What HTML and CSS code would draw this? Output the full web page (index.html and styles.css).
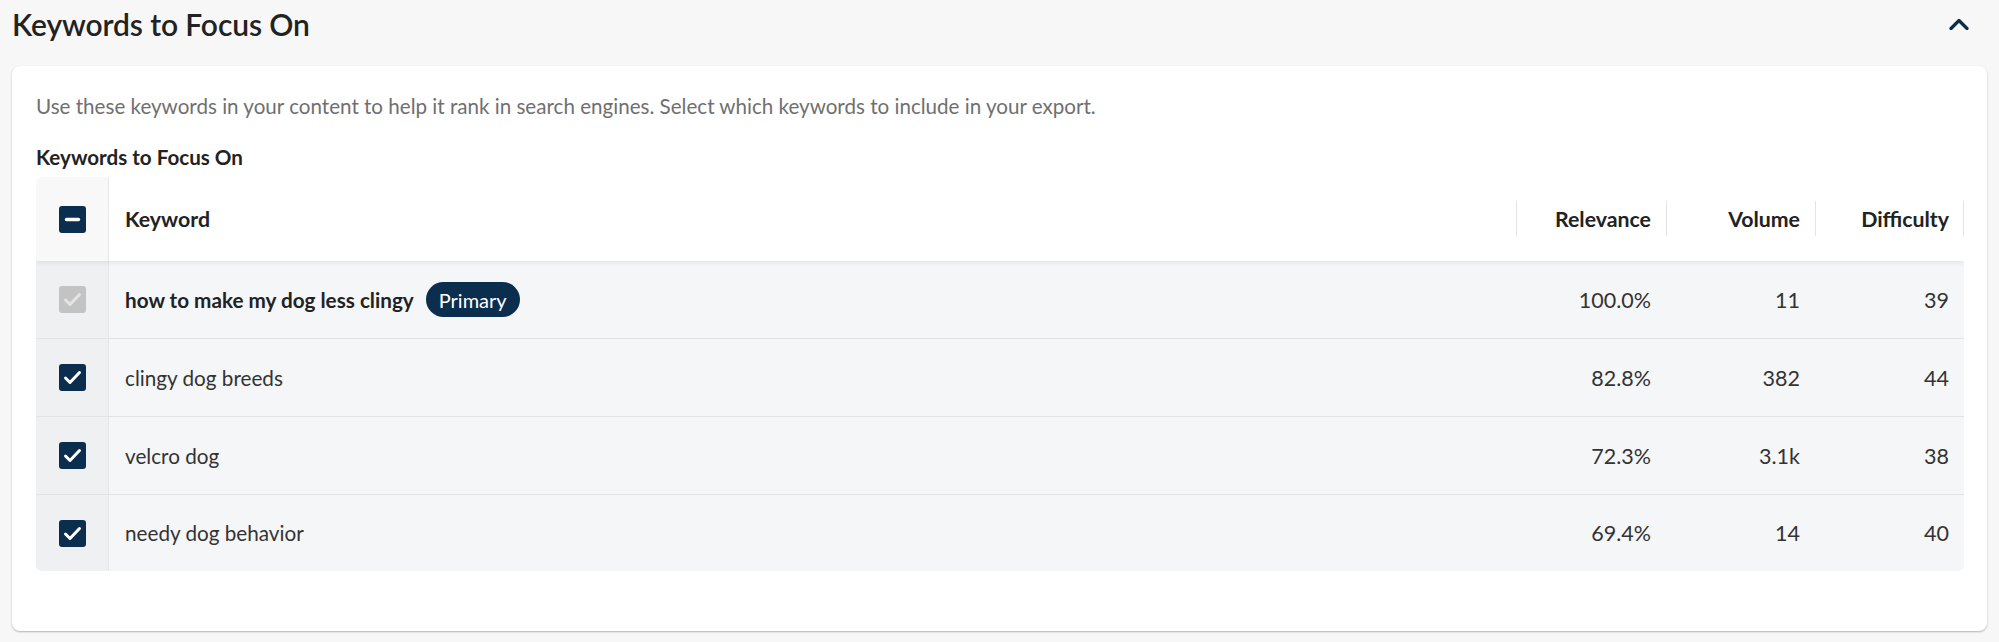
FILE: index.html
```html
<!DOCTYPE html>
<html lang="en">
<head>
<meta charset="utf-8">
<title>Keywords to Focus On</title>
<link rel="stylesheet" href="styles.css">
</head>
<body>
<div class="section-head">
  <h2 class="section-title">Keywords to Focus On</h2>
  <button class="collapse" aria-label="Collapse">
    <svg width="20" height="12" viewBox="0 0 20 12"><path d="M2 10.5 L10 2.5 L18 10.5" fill="none" stroke="#0b2d4e" stroke-width="3.2" stroke-linecap="round" stroke-linejoin="round"/></svg>
  </button>
</div>
<div class="card">
  <p class="desc">Use these keywords in your content to help it rank in search engines. Select which keywords to include in your export.</p>
  <h3 class="sub">Keywords to Focus On</h3>
  <div class="table">
    <div class="row head">
      <div class="cell check-cell"><span class="box"><svg width="27" height="27" viewBox="0 0 27 27"><path d="M7.5 13.5 H19.5" stroke="#fff" stroke-width="3.4" stroke-linecap="round"/></svg></span></div>
      <div class="cell kw">Keyword</div>
      <div class="cell num div">Relevance</div>
      <div class="cell num div">Volume</div>
      <div class="cell num div">Difficulty</div>
    </div>
    <div class="row">
      <div class="cell check-cell"><span class="box disabled"><svg width="27" height="27" viewBox="0 0 27 27"><path d="M6.5 14 L11 18.5 L20.5 8.5" fill="none" stroke="#e4e4e4" stroke-width="3" stroke-linecap="round" stroke-linejoin="round"/></svg></span></div>
      <div class="cell kw"><strong>how to make my dog less clingy</strong><span class="badge">Primary</span></div>
      <div class="cell num">100.0%</div>
      <div class="cell num">11</div>
      <div class="cell num">39</div>
    </div>
    <div class="row">
      <div class="cell check-cell"><span class="box"><svg width="27" height="27" viewBox="0 0 27 27"><path d="M6.5 14 L11 18.5 L20.5 8.5" fill="none" stroke="#fff" stroke-width="3" stroke-linecap="round" stroke-linejoin="round"/></svg></span></div>
      <div class="cell kw">clingy dog breeds</div>
      <div class="cell num">82.8%</div>
      <div class="cell num">382</div>
      <div class="cell num">44</div>
    </div>
    <div class="row">
      <div class="cell check-cell"><span class="box"><svg width="27" height="27" viewBox="0 0 27 27"><path d="M6.5 14 L11 18.5 L20.5 8.5" fill="none" stroke="#fff" stroke-width="3" stroke-linecap="round" stroke-linejoin="round"/></svg></span></div>
      <div class="cell kw">velcro dog</div>
      <div class="cell num">72.3%</div>
      <div class="cell num">3.1k</div>
      <div class="cell num">38</div>
    </div>
    <div class="row last">
      <div class="cell check-cell"><span class="box"><svg width="27" height="27" viewBox="0 0 27 27"><path d="M6.5 14 L11 18.5 L20.5 8.5" fill="none" stroke="#fff" stroke-width="3" stroke-linecap="round" stroke-linejoin="round"/></svg></span></div>
      <div class="cell kw">needy dog behavior</div>
      <div class="cell num">69.4%</div>
      <div class="cell num">14</div>
      <div class="cell num">40</div>
    </div>
  </div>
</div>
</body>
</html>
```
FILE: styles.css
```css
* { box-sizing: border-box; }
html, body { margin: 0; padding: 0; }
body {
  background: #f7f7f7;
  font-family: Lato, "Open Sans", "Liberation Sans", sans-serif;
  color: #222;
  width: 1999px;
  height: 642px;
  overflow: hidden;
}
.section-head {
  height: 50px;
  display: flex;
  align-items: center;
  justify-content: space-between;
  padding: 0 30px 0 12px;
}
.section-title {
  margin: 0;
  margin-top: -2px;
  font-size: 30px;
  font-weight: 600;
  color: #222;
  letter-spacing: -0.1px;
}
.collapse {
  border: 0;
  background: none;
  padding: 0;
  display: flex;
  margin-top: -2px;
}
.card {
  margin: 16px 12px 0 12px;
  background: #fff;
  border-radius: 8px;
  box-shadow: 0 1px 2px rgba(0,0,0,0.28);
  padding: 28px 23px 60px 24px;
}
.desc {
  margin: 0;
  font-size: 20.6px;
  line-height: 24px;
  color: #6f6f6f;
}
.sub {
  margin: 27px 0 0 0;
  font-size: 20.6px;
  line-height: 24px;
  font-weight: 700;
  color: #222;
}
.table {
  margin-top: 8px;
  border-radius: 6px;
  overflow: hidden;
}
.row {
  display: grid;
  grid-template-columns: 73px 1fr 150px 149px 149px;
  height: 78px;
  background: #f5f6f8;
  border-bottom: 1px solid #e1e3e6;
}
.row.last { border-bottom: 0; height: 76px; }
.row.head {
  height: 84px;
  background: #fff;
  border-bottom: 0;
  position: relative;
  z-index: 1;
  box-shadow: 0 2px 4px rgba(0,0,0,0.07);
}
.cell {
  display: flex;
  align-items: center;
  font-size: 20.7px;
  color: #333;
  position: relative;
}
.head .cell { font-weight: 700; color: #222; font-size: 21.3px; }
.check-cell {
  justify-content: center;
  padding-left: 1px;
  background: #eef0f2;
  border-right: 1px solid #e3e5e8;
}
.head .check-cell { background: #f8f8f8; border-right-color: #e9e9e9; }
.kw { padding-left: 16px; }
.kw strong { font-weight: 700; color: #222; }
.num { justify-content: flex-end; padding-right: 15px; font-size: 21.5px; }
.head .div::before {
  content: "";
  position: absolute;
  left: 0;
  top: 24px;
  bottom: 25px;
  width: 1px;
  background: #e3e3e3;
}
.head .div:last-child::after {
  content: "";
  position: absolute;
  right: 0;
  top: 24px;
  bottom: 25px;
  width: 1px;
  background: #e3e3e3;
}
.box {
  width: 27px;
  height: 27px;
  border-radius: 3px;
  background: #0b2d4e;
  display: flex;
}
.box.disabled { background: #c3c3c3; }
.badge {
  margin-left: 12px;
  height: 35px;
  padding: 0 13px;
  border-radius: 18px;
  background: #0b2d4e;
  color: #fff;
  font-size: 20px;
  font-weight: 400;
  display: inline-flex;
  align-items: center;
}
```
